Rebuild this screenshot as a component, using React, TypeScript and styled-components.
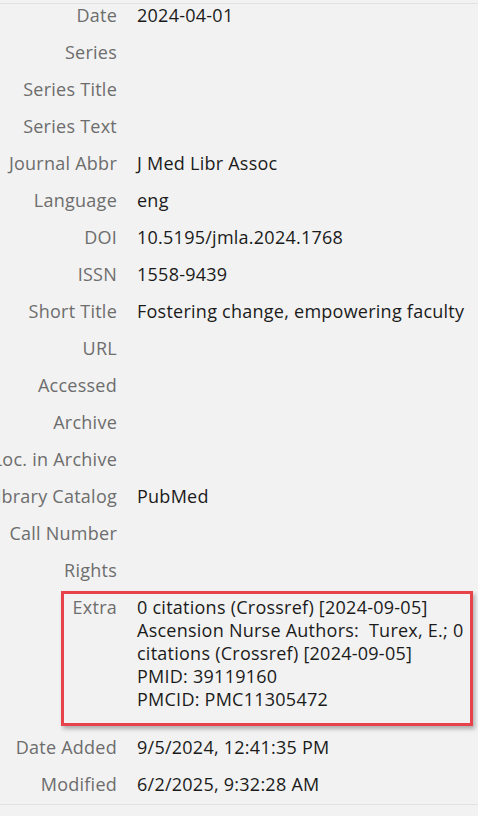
import React from "react";
import styled, { createGlobalStyle } from "styled-components";

const Global = createGlobalStyle`
  html, body { margin: 0; padding: 0; background: #f2f2f2; }
  body { overflow: hidden; width: 478px; height: 816px; }
`;

const Pane = styled.div`
  width: 478px;
  height: 816px;
  background: #f2f2f2;
  font-family: "Open Sans", "Noto Sans", sans-serif;
  font-size: 18px;
  letter-spacing: 0.25px;
  overflow: hidden;
  display: flex;
  flex-direction: column;
`;

const Divider = styled.div<{ $gap: number }>`
  height: 1px;
  background: #e2e2e2;
  margin-top: ${(p) => p.$gap}px;
  flex: none;
`;

const FieldList = styled.div`
  display: grid;
  grid-template-columns: 117px 1fr;
  column-gap: 20px;
  margin-top: -7px;
  flex: none;
`;

const Row = styled.div`
  display: contents;
`;

const Label = styled.div<{ $extra?: boolean }>`
  white-space: nowrap;
  direction: rtl;
  color: #6d6d6d;
  line-height: 23px;
  padding: 7px 0 ${(p) => (p.$extra ? 18 : 7)}px;
  display: flex;
  justify-content: flex-start;
`;

const LabelText = styled.span`
  direction: ltr;
  unicode-bidi: isolate;
`;

const Value = styled.div<{ $extra?: boolean }>`
  color: #1b1b1b;
  line-height: 23px;
  padding: 7px 0 ${(p) => (p.$extra ? 18 : 7)}px;
  position: relative;
  white-space: pre-wrap;
`;

const Highlight = styled.div`
  position: absolute;
  left: -76px;
  right: 5px;
  top: 2px;
  bottom: 3px;
  border: 3px solid #e8434a;
  box-shadow: 2px 3px 4px rgba(0, 0, 0, 0.28);
  pointer-events: none;
`;

const fields: [string, string][] = [
  ["Date", "2024-04-01"],
  ["Series", ""],
  ["Series Title", ""],
  ["Series Text", ""],
  ["Journal Abbr", "J Med Libr Assoc"],
  ["Language", "eng"],
  ["DOI", "10.5195/jmla.2024.1768"],
  ["ISSN", "1558-9439"],
  ["Short Title", "Fostering change, empowering faculty"],
  ["URL", ""],
  ["Accessed", ""],
  ["Archive", ""],
  ["Loc. in Archive", ""],
  ["Library Catalog", "PubMed"],
  ["Call Number", ""],
  ["Rights", ""],
];

const extraLines = [
  "0 citations (Crossref) [2024-09-05]",
  "Ascension Nurse Authors:  Turex, E.; 0",
  "citations (Crossref) [2024-09-05]",
  "PMID: 39119160",
  "PMCID: PMC11305472",
];

const after: [string, string][] = [
  ["Date Added", "9/5/2024, 12:41:35 PM"],
  ["Modified", "6/2/2025, 9:32:28 AM"],
];

export default function App() {
  return (
    <Pane>
      <Global />
      <Divider $gap={3} />
      <FieldList>
        {fields.map(([l, v]) => (
          <Row key={l}>
            <Label>
              <LabelText>{l}</LabelText>
            </Label>
            <Value>{v || "\u00a0"}</Value>
          </Row>
        ))}
        <Row>
          <Label $extra>
            <LabelText>Extra</LabelText>
          </Label>
          <Value $extra>
            {extraLines.join("\n")}
            <Highlight />
          </Value>
        </Row>
        {after.map(([l, v]) => (
          <Row key={l}>
            <Label>
              <LabelText>{l}</LabelText>
            </Label>
            <Value>{v}</Value>
          </Row>
        ))}
      </FieldList>
      <Divider $gap={1} />
    </Pane>
  );
}
